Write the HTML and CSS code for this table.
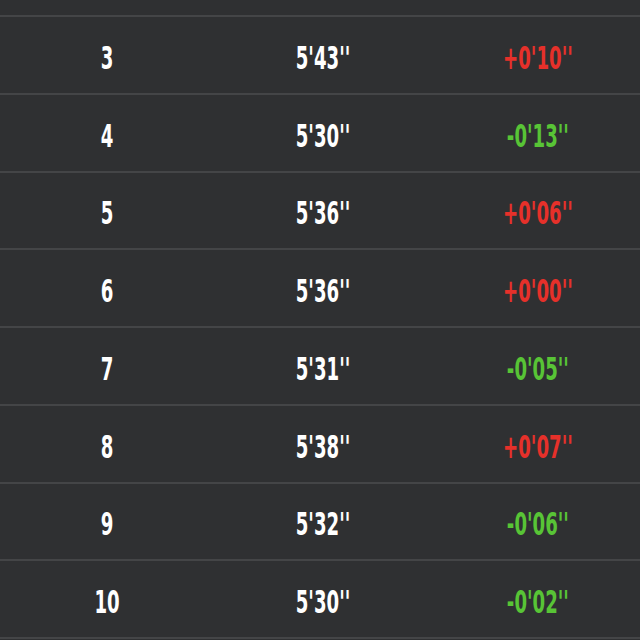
FILE: index.html
```html
<!DOCTYPE html>
<html>
<head>
<meta charset="utf-8">
<link rel="stylesheet" href="styles.css">
</head>
<body>
<div class="table">
  <div class="row row-partial"></div>
  <div class="row"><span class="cell">3</span><span class="cell">5'43''</span><span class="cell up">+0'10''</span></div>
  <div class="row"><span class="cell">4</span><span class="cell">5'30''</span><span class="cell down">-0'13''</span></div>
  <div class="row"><span class="cell">5</span><span class="cell">5'36''</span><span class="cell up">+0'06''</span></div>
  <div class="row"><span class="cell">6</span><span class="cell">5'36''</span><span class="cell up">+0'00''</span></div>
  <div class="row"><span class="cell">7</span><span class="cell">5'31''</span><span class="cell down">-0'05''</span></div>
  <div class="row"><span class="cell">8</span><span class="cell">5'38''</span><span class="cell up">+0'07''</span></div>
  <div class="row"><span class="cell">9</span><span class="cell">5'32''</span><span class="cell down">-0'06''</span></div>
  <div class="row"><span class="cell">10</span><span class="cell">5'30''</span><span class="cell down">-0'02''</span></div>
</div>
</body>
</html>
```
FILE: styles.css
```css
html, body {
  margin: 0;
  padding: 0;
  background: #2f3032;
  height: 640px;
  overflow: hidden;
}
.table {
  display: flex;
  flex-direction: column;
}
.row {
  display: grid;
  grid-template-columns: 214px 218px 208px;
  align-items: center;
  height: 75.75px;
  border-bottom: 2px solid #444547;
}
.row-partial {
  height: 15px;
}
.cell {
  text-align: center;
  font-family: "DejaVu Sans Condensed", sans-serif;
  font-weight: bold;
  font-size: 32px;
  line-height: 32px;
  padding-top: 6px;
  color: #ffffff;
  transform: scaleX(0.63);
}
.cell:last-child {
  padding-left: 6px;
}
.up { color: #e6302a; }
.down { color: #58c436; }
```
